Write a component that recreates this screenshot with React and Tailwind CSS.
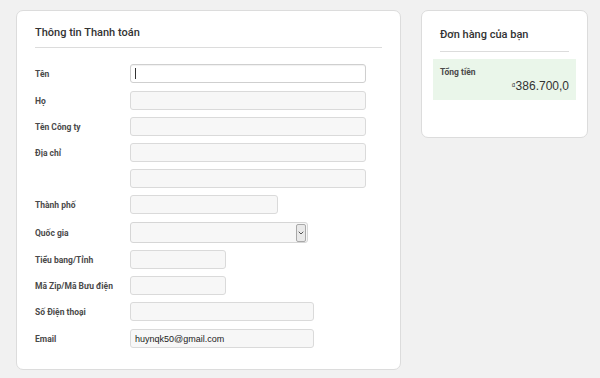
import { ChevronDown } from 'lucide-react';

const rows = [
  { label: 'Tên', w: 'w-[236px]', mt: 'mt-0', focus: true },
  { label: 'Họ', w: 'w-[236px]', mt: 'mt-[8px]' },
  { label: 'Tên Công ty', w: 'w-[236px]', mt: 'mt-[7px]' },
  { label: 'Địa chỉ', w: 'w-[236px]', mt: 'mt-[7px]' },
  { label: '', w: 'w-[236px]', mt: 'mt-[7px]' },
  { label: 'Thành phố', w: 'w-[148px]', mt: 'mt-[7px]' },
  { label: 'Quốc gia', w: 'w-[178px]', mt: 'mt-[8px]', select: true },
  { label: 'Tiểu bang/Tỉnh', w: 'w-[96px]', mt: 'mt-[7px]' },
  { label: 'Mã Zip/Mã Bưu điện', w: 'w-[96px]', mt: 'mt-[7px]' },
  { label: 'Số Điện thoại', w: 'w-[184px]', mt: 'mt-[7px]' },
  { label: 'Email', w: 'w-[184px]', mt: 'mt-[8px]', value: 'huynqk50@gmail.com' },
];

const Field = ({ row }) => {
  if (row.select) {
    return (
      <div className={`relative h-[21px] ${row.w}`}>
        <select className="w-full h-full appearance-none rounded-[3px] border border-[#d6d6d6] bg-[#f7f7f7] outline-none" />
        <span className="absolute right-[2px] top-[2px] bottom-[1px] w-[10px] flex items-center justify-center rounded-[2px] border border-[#a9a9a9] bg-[#e9e9e9] text-[#555]">
          <ChevronDown className="w-[8px] h-[8px]" strokeWidth={3} />
        </span>
      </div>
    );
  }
  if (row.focus) {
    return (
      <div className={`h-[19px] ${row.w} rounded-[3px] border border-[#cfcfcf] bg-white shadow-[inset_0_1px_1px_rgba(0,0,0,0.06)] flex items-center pl-[4px]`}>
        <span className="block w-px h-[11px] bg-[#333]" />
      </div>
    );
  }
  return (
    <input
      readOnly
      value={row.value || ''}
      className={`h-[19px] ${row.w} rounded-[3px] border border-[#dadada] bg-[#f7f7f7] px-[4px] text-[9px] text-[#222] outline-none font-['Liberation_Sans',Arial,sans-serif]`}
    />
  );
};

export default function App() {
  return (
    <div className="w-[600px] h-[378px] bg-[#f1f1f1] flex items-start gap-[20px] pl-[16px] pt-[10px] font-['Roboto',Arial,sans-serif]">
      <div className="w-[385px] h-[360px] bg-white border border-[#dcdcdc] rounded-[7px] px-[18px] pt-[14px]">
        <h2 className="text-[11px] leading-[16px] font-medium text-[#333] pb-[6px] border-b border-[#dcdcdc]">
          Thông tin Thanh toán
        </h2>
        <div className="mt-[16px] flex flex-col">
          {rows.map((row, i) => (
            <div key={i} className={`flex items-center ${row.mt}`}>
              <label className="w-[95px] shrink-0 text-[8.5px] leading-[10px] font-bold text-[#4a4a4a] pt-[1px]">{row.label}</label>
              <Field row={row} />
            </div>
          ))}
        </div>
      </div>

      <div className="w-[167px] h-[128px] bg-white border border-[#dcdcdc] rounded-[7px] px-[18px] pt-[16px]">
        <h2 className="text-[11px] leading-[16px] font-medium text-[#333] pb-[8px] border-b border-[#dcdcdc]">
          Đơn hàng của bạn
        </h2>
        <div className="-mx-[7px] mt-[7px] h-[41px] bg-[#eaf6ea] px-[7px] pt-[8px]">
          <p className="text-[8.5px] leading-[10px] font-bold text-[#4a4a4a]">Tổng tiền</p>
          <p className="text-right text-[12px] leading-[14px] text-[#333] mt-[2px] font-['Liberation_Sans',Arial,sans-serif]">
            <span className="text-[8px] align-top">₫</span>386.700,0
          </p>
        </div>
      </div>
    </div>
  );
}
